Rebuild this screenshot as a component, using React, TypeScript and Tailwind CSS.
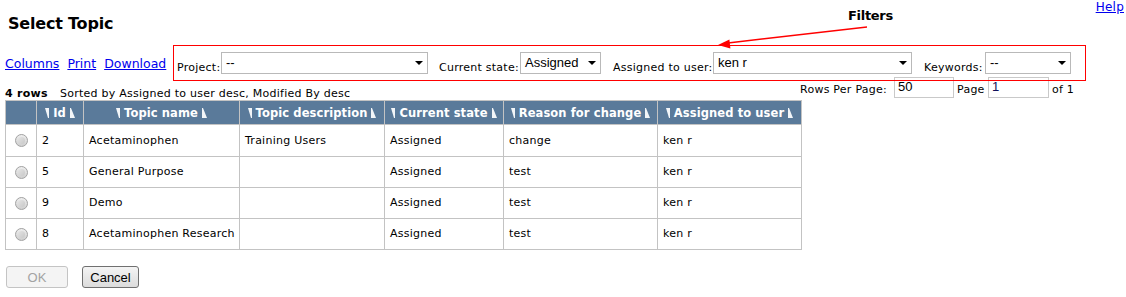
import React from 'react';

const rows = [
  { id: '2', name: 'Acetaminophen', desc: 'Training Users', state: 'Assigned', reason: 'change', user: 'ken r' },
  { id: '5', name: 'General Purpose', desc: '', state: 'Assigned', reason: 'test', user: 'ken r' },
  { id: '9', name: 'Demo', desc: '', state: 'Assigned', reason: 'test', user: 'ken r' },
  { id: '8', name: 'Acetaminophen Research', desc: '', state: 'Assigned', reason: 'test', user: 'ken r' },
];

const headers = ['Id', 'Topic name', 'Topic description', 'Current state', 'Reason for change', 'Assigned to user'];

function SortLeft() {
  return (
    <svg width="4" height="10" viewBox="0 0 4 10" className="shrink-0">
      <polygon points="0,0 4,0 4,10 3,10" fill="#f2f5f8" />
    </svg>
  );
}

function SortRight() {
  return (
    <svg width="5" height="10" viewBox="0 0 5 10" className="shrink-0">
      <polygon points="0,0 1,0 5,10 0,10" fill="#f2f5f8" />
    </svg>
  );
}

function FakeSelect({ value, width }: { value: string; width: string }) {
  return (
    <div
      className={`${width} h-[22px] border border-[#b9b9b9] bg-white flex items-center justify-between pl-[4px] pr-[4px] pb-[1px] text-[13px] tracking-normal font-['Liberation_Sans',Arial,sans-serif] text-black`}
    >
      <span className="leading-[15px] whitespace-nowrap">{value}</span>
      <svg width="8" height="4" viewBox="0 0 8 4">
        <polygon points="0,0 8,0 4,4" fill="#000" />
      </svg>
    </div>
  );
}

function Radio() {
  return (
    <div className="w-[13px] h-[13px] rounded-full border border-[#a3a3a3] bg-gradient-to-b from-[#eeeeee] to-[#cfcfcf] mx-auto flex items-center justify-center">
      <div className="w-[7px] h-[7px] rounded-full bg-gradient-to-br from-[#e4e4e4] to-[#c8c8c8]" />
    </div>
  );
}

export default function App() {
  return (
    <div className="w-[1126px] h-[297px] bg-white relative overflow-hidden font-['DejaVu_Sans',Verdana,sans-serif] text-[11px] tracking-[0.25px] text-black">
      {/* Help */}
      <div className="flex justify-end h-[14px] pr-[2px]">
        <a href="#" className="text-[12px] leading-[14px] text-[#0000ee] underline">
          Help
        </a>
      </div>

      {/* Title */}
      <h1 className="ml-[8px] text-[16px] leading-[20px] font-bold tracking-[-0.2px]">Select Topic</h1>

      {/* Links + filter box */}
      <div className="flex items-end mt-[11px]">
        <div className="w-[173px] pl-[5px] pb-[10px] flex gap-[8px] text-[12.5px] leading-[14px] tracking-normal">
          <a href="#" className="text-[#0000ee] underline">Columns</a>
          <a href="#" className="text-[#0000ee] underline">Print</a>
          <a href="#" className="text-[#0000ee] underline">Download</a>
        </div>
        <div className="relative z-10 w-[913px] h-[36px] border border-[#ff0000] flex items-end pl-[3px] pb-[6px]">
          <span className="w-[44px] leading-[13px] whitespace-nowrap">Project:</span>
          <FakeSelect value="--" width="w-[207px]" />
          <span className="ml-[11px] w-[81px] leading-[13px] whitespace-nowrap">Current state:</span>
          <FakeSelect value="Assigned" width="w-[81px]" />
          <span className="ml-[12px] w-[100px] leading-[13px] whitespace-nowrap">Assigned to user:</span>
          <FakeSelect value="ken r" width="w-[199px]" />
          <span className="ml-[12px] w-[61px] leading-[13px] whitespace-nowrap">Keywords:</span>
          <FakeSelect value="--" width="w-[86px]" />
        </div>
      </div>

      {/* Row count + pager */}
      <div className="flex h-[23px] mt-[-4px]">
        <div className="w-[800px] pl-[5px] self-end leading-[13px] whitespace-nowrap">
          <span className="inline-block w-[55px] font-bold">4 rows</span>
          <span>Sorted by Assigned to user desc, Modified By desc</span>
        </div>
        <div className="flex items-start">
          <span className="w-[94px] pt-[6px] leading-[13px] whitespace-nowrap">Rows Per Page:</span>
          <div className="w-[60px] h-[21px] border border-[#c9c9c9] bg-white pl-[3px] pt-[1px] text-[13px] leading-[15px] tracking-normal font-['Liberation_Sans',Arial,sans-serif]">
            50
          </div>
          <span className="ml-[3px] w-[31px] pt-[6px] leading-[13px]">Page</span>
          <div className="w-[61px] h-[21px] border border-[#c9c9c9] bg-white pl-[3px] pt-[1px] text-[13px] leading-[15px] tracking-normal text-[#10105a] font-['Liberation_Sans',Arial,sans-serif]">
            1
          </div>
          <span className="ml-[3px] pt-[6px] leading-[13px]">of 1</span>
        </div>
      </div>

      {/* Table */}
      <table className="ml-[5px] border-collapse table-fixed w-[796px]">
        <colgroup>
          <col className="w-[31px]" />
          <col className="w-[47px]" />
          <col className="w-[156px]" />
          <col className="w-[145px]" />
          <col className="w-[119px]" />
          <col className="w-[154px]" />
          <col className="w-[144px]" />
        </colgroup>
        <thead>
          <tr className="h-[24px] bg-[#5a7a9a]">
            <th className="border border-[#c3c3c3]" />
            {headers.map((h) => (
              <th key={h} className="border border-[#c3c3c3] p-0">
                <div className="flex items-center justify-center gap-[4px] pt-[1px] text-white font-bold text-[11.5px] leading-[15px] tracking-[0.1px] whitespace-nowrap">
                  <SortLeft />
                  <span>{h}</span>
                  <SortRight />
                </div>
              </th>
            ))}
          </tr>
        </thead>
        <tbody>
          {rows.map((r, i) => (
            <tr key={r.id} className={i === 0 ? 'h-[32px]' : 'h-[31px]'}>
              <td className="border border-[#c3c3c3] p-0">
                <Radio />
              </td>
              <td className="border border-[#c3c3c3] px-[5px] pt-[1px]">{r.id}</td>
              <td className="border border-[#c3c3c3] px-[5px] pt-[1px] whitespace-nowrap">{r.name}</td>
              <td className="border border-[#c3c3c3] px-[5px] pt-[1px]">{r.desc}</td>
              <td className="border border-[#c3c3c3] px-[5px] pt-[1px]">{r.state}</td>
              <td className="border border-[#c3c3c3] px-[5px] pt-[1px]">{r.reason}</td>
              <td className="border border-[#c3c3c3] px-[5px] pt-[1px]">{r.user}</td>
            </tr>
          ))}
        </tbody>
      </table>

      {/* Buttons */}
      <div className="flex gap-[14px] ml-[6px] mt-[16px] font-['Liberation_Sans',Arial,sans-serif] text-[13px] tracking-normal">
        <button disabled className="w-[62px] h-[22px] rounded-[3px] border border-[#c4c4c4] bg-[#f4f4f4] text-[#a3a3a3] leading-[15px]">
          OK
        </button>
        <button className="w-[57px] h-[22px] rounded-[3px] border border-[#707070] bg-gradient-to-b from-[#f4f4f4] to-[#dcdcdc] text-black leading-[15px]">
          Cancel
        </button>
      </div>

      {/* Filters annotation */}
      <span className="absolute left-[848px] top-[8px] text-[13px] leading-[16px] font-bold tracking-[-0.3px]">Filters</span>
      <svg className="absolute left-0 top-0 pointer-events-none z-20" width="1126" height="60">
        <line x1="867" y1="27" x2="728" y2="43" stroke="#ff0000" strokeWidth="1.5" />
        <polygon points="718,45 730.4,48.6 729.4,39.6" fill="#ff0000" />
      </svg>
    </div>
  );
}
